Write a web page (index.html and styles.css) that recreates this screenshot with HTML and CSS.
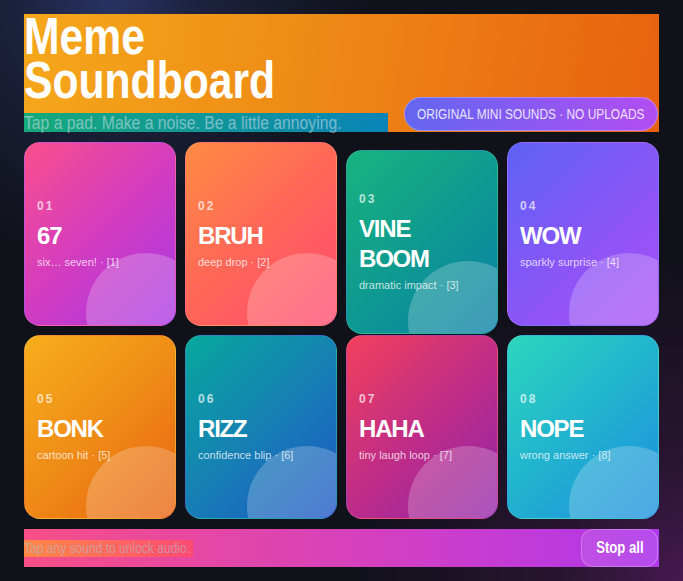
FILE: index.html
```html
<!DOCTYPE html>
<html lang="en">
<head>
<meta charset="utf-8">
<title>Meme Soundboard</title>
<link rel="stylesheet" href="styles.css">
</head>
<body>
<main class="app">
  <header class="hero">
    <div class="hero-text">
      <h1 class="title">Meme<br>Soundboard</h1>
      <p class="subtitle"><span class="narrow">Tap a pad. Make a noise. Be a little annoying.</span></p>
    </div>
    <div class="pill"><span class="narrow-c">ORIGINAL MINI SOUNDS · NO UPLOADS</span></div>
  </header>

  <section class="grid">
    <button class="pad pad-1"><span class="num">01</span><span class="name">67</span><span class="desc">six… seven! · [1]</span></button>
    <button class="pad pad-2"><span class="num">02</span><span class="name">BRUH</span><span class="desc">deep drop · [2]</span></button>
    <button class="pad pad-3 is-active"><span class="num">03</span><span class="name">VINE<br>BOOM</span><span class="desc">dramatic impact · [3]</span></button>
    <button class="pad pad-4"><span class="num">04</span><span class="name">WOW</span><span class="desc">sparkly surprise · [4]</span></button>
    <button class="pad pad-5"><span class="num">05</span><span class="name">BONK</span><span class="desc">cartoon hit · [5]</span></button>
    <button class="pad pad-6"><span class="num">06</span><span class="name">RIZZ</span><span class="desc">confidence blip · [6]</span></button>
    <button class="pad pad-7"><span class="num">07</span><span class="name">HAHA</span><span class="desc">tiny laugh loop · [7]</span></button>
    <button class="pad pad-8"><span class="num">08</span><span class="name">NOPE</span><span class="desc">wrong answer · [8]</span></button>
  </section>

  <footer class="bar">
    <span class="status"><span class="narrow">Tap any sound to unlock audio.</span></span>
    <button class="stop"><span class="narrow-c">Stop all</span></button>
  </footer>
</main>
</body>
</html>
```

FILE: styles.css
```css
html, body {
  margin: 0;
  height: 100%;
}
body {
  background:
    radial-gradient(circle at 110px 0px, #283363 0%, rgba(40,51,99,0.5) 90px, rgba(17,18,28,0) 260px),
    radial-gradient(circle at 100% 100%, #46194f 0%, rgba(70,25,79,0.45) 120px, rgba(17,18,28,0) 330px),
    #101119;
  font-family: "Liberation Sans", Arial, sans-serif;
  color: #fff;
}
.app {
  padding: 14px 24px;
  display: flex;
  flex-direction: column;
  gap: 10px;
}
/* condensed text: no narrow face is installed, so squeeze the regular one */
.narrow,
.narrow-c {
  display: inline-block;
  white-space: nowrap;
  transform: scaleX(0.82);
}
.narrow { transform-origin: 0 50%; }
.narrow-c { transform-origin: 50% 50%; }

.hero {
  display: flex;
  align-items: flex-end;
  gap: 16px;
  padding-right: 1px;
  background: linear-gradient(100deg, #f5a81b 0%, #ee8a16 45%, #e8610f 100%);
}
.hero-text {
  flex: 1;
  min-width: 0;
  display: flex;
  flex-direction: column;
}
.title {
  margin: 0 0 11px 0;
  font-weight: 700;
  font-size: 52px;
  line-height: 44px;
  color: #fff;
  white-space: nowrap;
  transform: scaleX(0.82);
  transform-origin: 0 0;
}
.subtitle {
  margin: 0;
  height: 19px;
  font-size: 19.2px;
  line-height: 19px;
  color: rgba(226, 232, 240, 0.5);
  background: linear-gradient(90deg, #16a97b 0%, #0a84b8 100%);
  white-space: nowrap;
}
.pill {
  flex: none;
  box-sizing: border-box;
  width: 254px;
  height: 34px;
  margin-bottom: 1px;
  display: flex;
  align-items: center;
  justify-content: center;
  border: 1px solid rgba(255, 255, 255, 0.3);
  border-radius: 999px;
  background: linear-gradient(90deg, #6366f1 0%, #b24df1 100%);
  font-size: 14.5px;
  color: rgba(255, 255, 255, 0.85);
  white-space: nowrap;
}
.grid {
  display: grid;
  grid-template-columns: repeat(4, 1fr);
  grid-auto-rows: 184px;
  gap: 9px;
}
.pad {
  position: relative;
  overflow: hidden;
  display: flex;
  flex-direction: column;
  justify-content: center;
  align-items: flex-start;
  text-align: left;
  margin: 0;
  padding: 0 12px;
  border: 1px solid rgba(255, 255, 255, 0.12);
  border-radius: 16px;
  font-family: "Liberation Sans", Arial, sans-serif;
  color: #fff;
  cursor: pointer;
}
.pad::after {
  content: "";
  position: absolute;
  width: 120px;
  height: 120px;
  right: -31px;
  bottom: -48px;
  border-radius: 50%;
  background: rgba(255, 255, 255, 0.22);
}
.pad.is-active {
  transform: translateY(8px);
}
.num {
  display: block;
  font-size: 12px;
  line-height: 14px;
  font-weight: 700;
  letter-spacing: 2px;
  color: rgba(255, 255, 255, 0.7);
}
.name {
  display: block;
  margin: 8px 0 4px;
  font-size: 24px;
  line-height: 30px;
  font-weight: 700;
  letter-spacing: -1.2px;
}
.desc {
  display: block;
  font-size: 11px;
  line-height: 14px;
  color: rgba(255, 255, 255, 0.75);
}
.pad-1 { background: linear-gradient(135deg, #fa4f8c 0%, #d23cc0 50%, #a838e6 100%); }
.pad-2 { background: linear-gradient(135deg, #ff8b43 0%, #ff6658 50%, #ff4a70 100%); }
.pad-3 { background: linear-gradient(135deg, #18b47e 0%, #0e9a90 50%, #0a7fa8 100%); }
.pad-4 { background: linear-gradient(135deg, #5d62f6 0%, #8b55f7 55%, #a94ff6 100%); }
.pad-5 { background: linear-gradient(135deg, #f6ae1c 0%, #ef8c17 50%, #e8620f 100%); }
.pad-6 { background: linear-gradient(135deg, #07a89c 0%, #1680b4 50%, #1f55c6 100%); }
.pad-7 { background: linear-gradient(135deg, #f2405c 0%, #c02d86 50%, #9124aa 100%); }
.pad-8 { background: linear-gradient(135deg, #2dd6bd 0%, #21b2cf 50%, #1c8fe0 100%); }
.bar {
  height: 38px;
  display: flex;
  align-items: center;
  justify-content: space-between;
  padding-right: 1px;
  background: linear-gradient(90deg, #f74f86 0%, #e146ab 35%, #c93ccf 70%, #ae38ec 100%);
}
.status {
  box-sizing: border-box;
  width: 169px;
  height: 17px;
  overflow: visible;
  font-size: 14.7px;
  line-height: 17px;
  color: rgba(175, 182, 200, 0.6);
  background: linear-gradient(90deg, #ff8845 0%, #ff4a74 100%);
  white-space: nowrap;
}
.stop {
  box-sizing: border-box;
  width: 77px;
  height: 38px;
  margin: 0;
  padding: 0;
  display: flex;
  align-items: center;
  justify-content: center;
  border: 1px solid rgba(255, 255, 255, 0.25);
  border-radius: 12px;
  background: rgba(255, 255, 255, 0.1);
  font-family: "Liberation Sans", Arial, sans-serif;
  font-size: 16px;
  font-weight: 700;
  color: #fff;
  white-space: nowrap;
  cursor: pointer;
}
```
